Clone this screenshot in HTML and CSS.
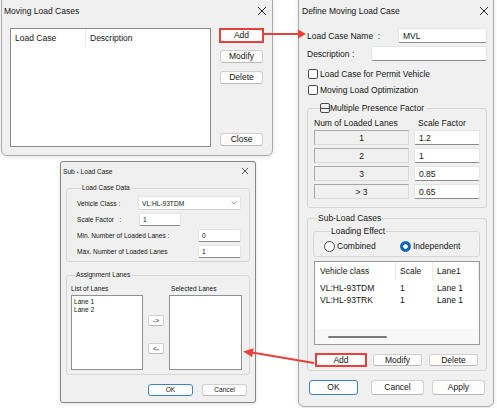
FILE: index.html
```html
<!DOCTYPE html>
<html lang="en">
<head>
    <meta charset="UTF-8">
    <title>Moving Load Cases</title>
    <link rel="stylesheet" href="styles.css">
</head>
<body>
    <div class="canvas">

        <!-- Moving Load Cases -->
        <div class="win win-cases">
            <div class="titlebar">
                <span>Moving Load Cases</span>
                <svg class="close" viewBox="0 0 8 8"><path d="M0 0L8 8M8 0L0 8"/></svg>
            </div>
            <div class="cases-body">
                <div class="cases-list">
                    <div class="cases-head">
                        <span class="col-case">Load Case</span>
                        <span class="col-desc">Description</span>
                    </div>
                </div>
                <div class="side-btns">
                    <button class="btn marked">Add</button>
                    <button class="btn">Modify</button>
                    <button class="btn">Delete</button>
                    <button class="btn btn-close">Close</button>
                </div>
            </div>
        </div>

        <!-- Define Moving Load Case -->
        <div class="win win-define">
            <div class="titlebar">
                <span>Define Moving Load Case</span>
                <svg class="close" viewBox="0 0 8 8"><path d="M0 0L8 8M8 0L0 8"/></svg>
            </div>
            <div class="define-body">
                <div class="field-row">
                    <span>Load Case Name &nbsp;:</span>
                    <div class="input name-input">MVL</div>
                </div>
                <div class="field-row">
                    <span>Description :</span>
                    <div class="input desc-input"></div>
                </div>
                <div class="check-row first"><span class="box"></span>Load Case for Permit Vehicle</div>
                <div class="check-row"><span class="box"></span>Moving Load Optimization</div>

                <fieldset class="group mpf">
                    <legend><span class="box legend-box"></span>Multiple Presence Factor</legend>
                    <div class="mpf-head">
                        <span>Num of Loaded Lanes</span>
                        <span class="head-factor">Scale Factor</span>
                    </div>
                    <div class="mpf-grid" id="mpfGrid"></div>
                </fieldset>

                <fieldset class="group sub-cases">
                    <legend>Sub-Load Cases</legend>
                    <fieldset class="group effect">
                        <legend>Loading Effect</legend>
                        <div class="radio-row">
                            <label class="radio-item combined"><span class="radio"></span>Combined</label>
                            <label class="radio-item"><span class="radio on"></span>Independent</label>
                        </div>
                    </fieldset>
                    <div class="listview">
                        <div class="lv-head">
                            <span>Vehicle class</span>
                            <span>Scale</span>
                            <span>Lane1</span>
                        </div>
                        <div class="lv-rows" id="lvRows"></div>
                        <div class="lv-scroll"><span class="lv-thumb"></span></div>
                    </div>
                    <div class="sub-btns">
                        <button class="btn marked w50">Add</button>
                        <button class="btn w49">Modify</button>
                        <button class="btn w49">Delete</button>
                    </div>
                </fieldset>

                <div class="dlg-btns">
                    <button class="btn default btn-ok">OK</button>
                    <button class="btn btn-cancel">Cancel</button>
                    <button class="btn btn-apply">Apply</button>
                </div>
            </div>
        </div>

        <!-- Sub - Load Case -->
        <div class="win win-sub">
            <div class="titlebar">
                <span>Sub - Load Case</span>
                <svg class="close" viewBox="0 0 8 8"><path d="M0 0L8 8M8 0L0 8"/></svg>
            </div>
            <div class="sub-body">
                <fieldset class="group lc-data">
                    <legend>Load Case Data</legend>
                    <div class="sub-row r1">
                        <span class="grow">Vehicle Class :</span>
                        <div class="input select">VL:HL-93TDM
                            <svg class="chev" viewBox="0 0 6 4"><path d="M0.5 0.5L3 3L5.5 0.5"/></svg>
                        </div>
                    </div>
                    <div class="sub-row">
                        <span class="scale-label">Scale Factor &nbsp;&nbsp;:</span>
                        <div class="input scale-input">1</div>
                    </div>
                    <div class="sub-row">
                        <span class="grow">Min. Number of Loaded Lanes :</span>
                        <div class="input num-input">0</div>
                    </div>
                    <div class="sub-row">
                        <span class="grow">Max. Number of Loaded Lanes</span>
                        <div class="input num-input">1</div>
                    </div>
                </fieldset>

                <fieldset class="group lanes-group">
                    <legend>Assignment Lanes</legend>
                    <div class="lanes">
                        <span>List of Lanes</span>
                        <span></span>
                        <span class="sel-label">Selected Lanes</span>
                        <div class="lane-list">
                            <div>Lane 1</div>
                            <div>Lane 2</div>
                        </div>
                        <div class="move-btns">
                            <button class="btn mini">-&gt;</button>
                            <button class="btn mini">&lt;-</button>
                        </div>
                        <div class="lane-list"></div>
                    </div>
                </fieldset>

                <div class="sub-dlg-btns">
                    <button class="btn default">OK</button>
                    <button class="btn">Cancel</button>
                </div>
            </div>
        </div>

        <!-- callout arrows -->
        <svg class="arrows" viewBox="0 0 497 408">
            <line x1="264" y1="34" x2="299" y2="34"/>
            <polygon points="298,29.5 306,34 298,38.5"/>
            <line x1="314" y1="363" x2="252" y2="352.5"/>
            <polygon points="253.6,348.2 243,351.5 252.1,357"/>
        </svg>
    </div>

    <script>
        const factors = [
            { lanes: '1', factor: '1.2' },
            { lanes: '2', factor: '1' },
            { lanes: '3', factor: '0.85' },
            { lanes: '> 3', factor: '0.65' }
        ];

        const subCases = [
            { vehicle: 'VL:HL-93TDM', scale: '1', lane: 'Lane 1' },
            { vehicle: 'VL:HL-93TRK', scale: '1', lane: 'Lane 1' }
        ];

        const grid = document.getElementById('mpfGrid');
        factors.forEach(f => {
            grid.innerHTML += `
                <div class="lane-cell">${f.lanes}</div>
                <div class="input factor-cell">${f.factor}</div>
            `;
        });

        const rows = document.getElementById('lvRows');
        subCases.forEach(s => {
            rows.innerHTML += `
                <div class="lv-row">
                    <span>${s.vehicle}</span>
                    <span>${s.scale}</span>
                    <span>${s.lane}</span>
                </div>
            `;
        });
    </script>
</body>
</html>
```

FILE: styles.css
```css
* {
    margin: 0;
    padding: 0;
    box-sizing: border-box;
}

body {
    background: #fff;
    font-family: 'Liberation Sans', Arial, sans-serif;
}

.canvas {
    position: relative;
    width: 497px;
    height: 408px;
    overflow: hidden;
    background: #fff;
}

/* windows */
.win {
    position: absolute;
    display: flex;
    flex-direction: column;
    background: #f0f0f0;
    border: 1px solid #ababab;
    border-radius: 0 0 6px 6px;
    box-shadow: 0 1px 4px rgba(0, 0, 0, 0.12);
    font-size: 8.5px;
    color: #151515;
}

.titlebar {
    display: flex;
    align-items: center;
    justify-content: space-between;
    height: 21px;
    padding: 0 6px 0 2px;
    flex-shrink: 0;
}

.close {
    width: 8px;
    height: 8px;
    stroke: #2a2a2a;
    stroke-width: 1;
    fill: none;
}

.btn {
    font: inherit;
    color: #151515;
    height: 13px;
    line-height: 11px;
    background: #fdfdfd;
    border: 1px solid #d0d0d0;
    border-bottom-color: #b8b8b8;
    border-radius: 3px;
}

/* red highlight box drawn over the button */
.btn.marked {
    position: relative;
}

.btn.marked::after {
    content: '';
    position: absolute;
    inset: -2px;
    border: 2px solid #e8413c;
}

.btn.default {
    border-color: #3b82c8;
}

.input {
    display: flex;
    align-items: center;
    height: 15px;
    padding: 0 4px;
    background: #fff;
    border: 1px solid #e4e4e4;
    border-bottom-color: #8c8c8c;
    border-radius: 2px;
}

.group {
    border: 1px solid #d6d6d6;
    border-radius: 3px;
    min-width: 0;
}

.group legend {
    line-height: 10px;
}

/* Moving Load Cases */
.win-cases {
    left: 1px;
    top: -1px;
    width: 272px;
    height: 157px;
}

.cases-body {
    display: flex;
    gap: 9px;
    padding: 7px 0 0 8px;
}

.cases-list {
    width: 201px;
    height: 119px;
    background: #fff;
    border: 1px solid #8a8a8a;
}

.cases-head {
    display: flex;
    height: 18px;
}

.cases-head span {
    display: flex;
    align-items: center;
    padding-left: 4px;
}

.col-case {
    width: 75px;
    border-right: 1px solid #ebebeb;
}

.side-btns {
    display: flex;
    flex-direction: column;
    gap: 8px;
    width: 43px;
    height: 119px;
    padding: 1px 0;
}

.btn-close {
    margin-top: auto;
}

/* Define Moving Load Case */
.win-define {
    left: 298px;
    top: -1px;
    width: 196px;
    height: 408px;
}

.win-define .titlebar {
    padding: 0 5px 0 3px;
}

.define-body {
    display: flex;
    flex-direction: column;
    padding: 7px 6px 0 8px;
}

.field-row {
    display: flex;
    align-items: center;
    justify-content: space-between;
    height: 15px;
}

.field-row + .field-row {
    margin-top: 3px;
}

.name-input {
    width: 89px;
}

.desc-input {
    width: 116px;
}

.check-row {
    display: flex;
    align-items: center;
    height: 16px;
}

.check-row.first {
    margin-top: 5px;
}

.box {
    display: inline-block;
    width: 10px;
    height: 10px;
    margin: 0 2px 0 1px;
    background: #fff;
    border: 1px solid #4a4a4a;
    border-radius: 2px;
}

.mpf {
    margin-top: 5px;
    padding: 3px 6px 8px;
}

.mpf legend {
    display: flex;
    align-items: center;
    margin-left: 6px;
    padding-right: 2px;
}

.legend-box {
    position: relative;
    margin: 0;
    background: transparent;
}

.legend-box::after {
    content: '';
    position: absolute;
    left: 0;
    right: 0;
    top: 3.5px;
    height: 1px;
    background: #4a4a4a;
}

.mpf-head {
    display: grid;
    grid-template-columns: 95px 1fr;
    column-gap: 5px;
    align-items: center;
    height: 13px;
    margin-bottom: 1px;
}

.head-factor {
    padding-left: 4px;
}

.mpf-grid {
    display: grid;
    grid-template-columns: 95px 1fr;
    gap: 3px 5px;
}

.lane-cell {
    display: flex;
    align-items: center;
    justify-content: center;
    height: 15px;
    background: #f0f0f0;
    border: 1px solid #a8a8a8;
    border-right-color: #dadada;
    border-bottom-color: #dadada;
}

.sub-cases {
    margin-top: 5px;
    padding: 3px 6px 4px 5px;
}

.sub-cases > legend {
    margin-left: 4px;
    padding: 0 1px;
}

.effect {
    padding: 3px 0 3px 10px;
}

.effect legend {
    margin-left: 6px;
    padding: 0 1px;
}

.radio-row {
    display: flex;
    align-items: center;
    height: 14px;
}

.radio-item {
    display: flex;
    align-items: center;
}

.radio-item.combined {
    width: 76px;
}

.radio {
    width: 11px;
    height: 11px;
    margin-right: 2px;
    border: 1px solid #4a4a4a;
    border-radius: 50%;
    background: #fff;
}

.radio.on {
    border-color: #0067c0;
    background: radial-gradient(circle, #fff 0 2px, #0067c0 2.6px);
}

.listview {
    display: flex;
    flex-direction: column;
    height: 84px;
    margin: 4px 0 0 1px;
    background: #fff;
    border: 1px solid #9a9a9a;
}

.lv-head,
.lv-row {
    display: grid;
    grid-template-columns: 81px 37px 1fr;
}

.lv-head {
    height: 18px;
}

.lv-head span {
    display: flex;
    align-items: center;
    padding-left: 4px;
    border-right: 1px solid #ebebeb;
}

.lv-head span:first-child {
    padding-left: 5px;
}

.lv-rows {
    margin-top: 2px;
}

.lv-row {
    height: 12px;
    align-items: center;
}

.lv-row span {
    padding-left: 4px;
}

.lv-row span:first-child {
    padding-left: 5px;
}

.lv-scroll {
    display: flex;
    align-items: center;
    height: 15px;
    margin-top: auto;
    background: #f8f8f8;
}

.lv-thumb {
    width: 59px;
    height: 2px;
    margin-left: 13px;
    background: #7a7a7a;
    border-radius: 1px;
}

.sub-btns {
    display: flex;
    justify-content: space-between;
    margin-top: 9px;
    padding: 0 2px 0 3px;
}

.sub-btns .btn {
    height: 12px;
    line-height: 10px;
}

.w50 {
    width: 50px;
}

.w49 {
    width: 49px;
}

.dlg-btns {
    display: flex;
    margin-top: 9px;
}

.dlg-btns .btn {
    height: 15px;
    line-height: 13px;
}

.btn-ok {
    width: 49px;
    margin-left: 2px;
}

.btn-cancel {
    width: 53px;
    margin-left: 13px;
}

.btn-apply {
    width: 53px;
    margin-left: 8px;
}

/* Sub - Load Case */
.win-sub {
    left: 60px;
    top: 161px;
    width: 196px;
    height: 242px;
    font-size: 6.6px;
    border-color: #858585;
    border-radius: 3px;
}

.win-sub .titlebar {
    height: 18px;
    padding: 0 7px 0 2px;
}

.win-sub .close {
    width: 6px;
    height: 6px;
}

.sub-body {
    display: flex;
    flex-direction: column;
    padding: 0 5px;
}

.win-sub .group legend {
    line-height: 8px;
    margin-left: 4px;
    padding: 0 1px;
}

.lc-data {
    margin-top: 4px;
    padding: 4px 8px 3px 10px;
}

.sub-row {
    display: flex;
    align-items: center;
    height: 13px;
    margin-top: 3px;
}

.sub-row.r1 {
    height: 14px;
    margin-top: 0;
}

.grow {
    flex: 1;
}

.win-sub .input {
    height: 100%;
    padding: 0 3px;
}

.select {
    width: 103px;
    justify-content: space-between;
    border-bottom-color: #d0d0d0;
}

.chev {
    width: 6px;
    height: 4px;
    fill: none;
    stroke: #8a8a8a;
    stroke-width: 0.8;
}

.scale-label {
    width: 62px;
}

.scale-input {
    width: 42px;
}

.num-input {
    width: 43px;
}

.lanes-group {
    margin-top: 9px;
    padding: 4px 8px 4px 4px;
}

.lanes {
    display: grid;
    grid-template-columns: 72px 26px 73px;
    grid-template-rows: 10px 75px;
    row-gap: 2px;
    align-items: center;
}

.sel-label {
    padding-left: 2px;
}

.lane-list {
    align-self: stretch;
    padding: 2px 2px;
    line-height: 8px;
    background: #fff;
    border: 1px solid #909090;
}

.move-btns {
    display: flex;
    flex-direction: column;
    align-items: center;
    align-self: stretch;
    gap: 17px;
    padding-top: 20px;
}

.btn.mini {
    width: 16px;
    height: 11px;
    line-height: 9px;
    border-radius: 2px;
}

.sub-dlg-btns {
    display: flex;
    gap: 9px;
    margin-top: 9px;
    padding-left: 82px;
}

.sub-dlg-btns .btn {
    width: 45px;
    height: 12px;
    line-height: 10px;
}

/* callouts */
.arrows {
    position: absolute;
    left: 0;
    top: 0;
    width: 497px;
    height: 408px;
    pointer-events: none;
}

.arrows line {
    stroke: #e8413c;
    stroke-width: 2.2;
}

.arrows polygon {
    fill: #e8413c;
}
```
